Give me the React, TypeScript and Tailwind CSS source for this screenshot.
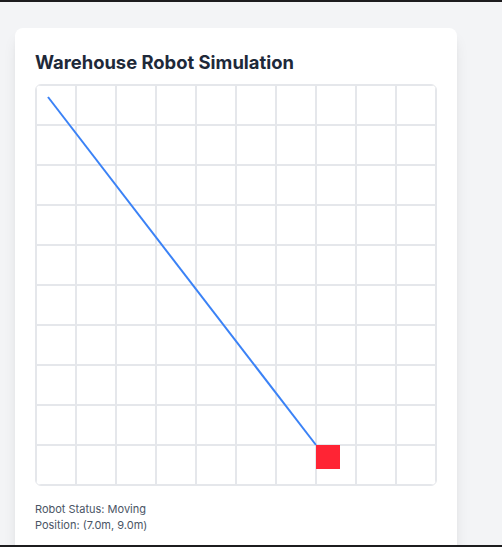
const GRID = 10
const CELL = 40

const robot = { x: 7, y: 9 }

export default function App() {
  const cells = Array.from({ length: GRID * GRID })
  const end = { x: robot.x * CELL, y: robot.y * CELL }

  return (
    <div className="h-[547px] flex flex-col overflow-hidden" style={{ fontFamily: 'Inter, "Liberation Sans", sans-serif' }}>
      <div className="h-[2px] bg-[#1c1c1e]" />
      <div className="flex-1 bg-gray-100 px-4 pt-[26px] overflow-hidden">
        <div className="w-[442px] -ml-px bg-white rounded-lg shadow-lg p-5 pb-10">
          <h1 className="text-[18.4px] font-bold text-gray-800 mb-2 leading-7">Warehouse Robot Simulation</h1>

          <div className="relative w-[402px] border border-gray-200 rounded-md overflow-hidden">
            <div className="grid grid-cols-10">
              {cells.map((_, i) => (
                <div key={i} className="w-10 h-10 border border-gray-200" />
              ))}
            </div>

            <svg className="absolute left-0 top-0 pointer-events-none" width={400} height={400}>
              <polyline
                points={`12,12 ${end.x},${end.y}`}
                fill="none"
                stroke="#3b82f6"
                strokeWidth={2}
              />
            </svg>

            <div
              className="absolute w-6 h-6 bg-[#ff2434]"
              style={{ left: end.x, top: end.y }}
            />
          </div>

          <div className="mt-[15px] text-[11px] text-gray-600 leading-4">
            <p>Robot Status: Moving</p>
            <p>Position: ({robot.x.toFixed(1)}m, {robot.y.toFixed(1)}m)</p>
          </div>
        </div>
      </div>
      <div className="h-[2px] bg-[#1c1c1e]" />
    </div>
  )
}
